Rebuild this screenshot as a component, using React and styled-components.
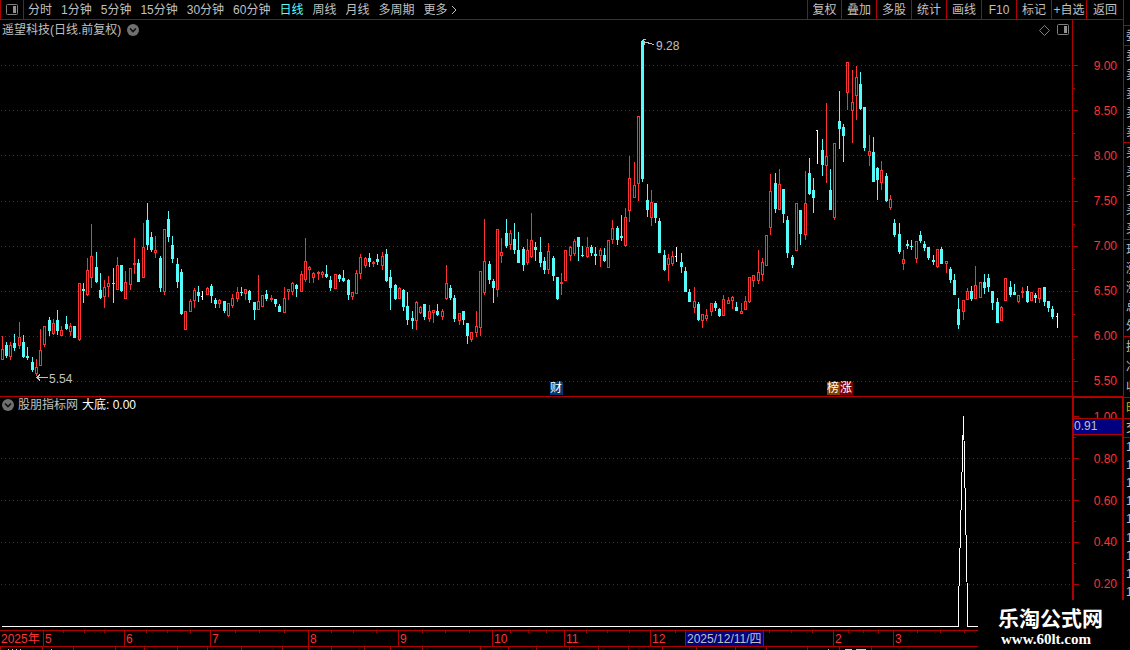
// Stock terminal: daily candles, indicator panel and time axis

// Import stuff
import React from 'react';
import styled, { createGlobalStyle } from 'styled-components';

const RED = '#b00000';
const UP = '#ff3232';
const DOWN = '#54fcfc';
const TEXT = '#c0c0c0';

const GlobalStyle = createGlobalStyle`
  * {
    box-sizing: border-box;
  }
  body {
    margin: 0;
    background: #000;
    color: ${TEXT};
    font-family: 'Liberation Sans', 'Noto Sans CJK SC', sans-serif;
    font-size: 12px;
    line-height: 14px;
  }
  button {
    margin: 0;
    padding: 0;
    border: 0;
    background: none;
    color: inherit;
    font: inherit;
    white-space: nowrap;
    cursor: pointer;
  }
  svg {
    display: block;
  }
`;

// Data
const periods = ['分时', '1分钟', '5分钟', '15分钟', '30分钟', '60分钟', '日线', '周线', '月线', '多周期'];

const tools = [
  ['复权', 34], ['叠加', 35], ['多股', 35], ['统计', 35], ['画线', 35],
  ['F10', 35], ['标记', 35], ['+自选', 35], ['返回', 37],
];

const prices = ['9.00', '8.50', '8.00', '7.50', '7.00', '6.50', '6.00', '5.50'];
const priceLines = [65, 110, 155, 201, 246, 291, 336, 381];
const levels = ['1.00', '0.80', '0.60', '0.40', '0.20'];
const levelLines = [458, 500, 542, 584];

const months = [
  ['2025年', 44], ['5', 81], ['6', 86], ['7', 98], ['8', 90], ['9', 94],
  ['10', 72], ['11', 86], ['12', 183], ['2', 60], ['3', 85],
];
const weekTicks = [
  63, 84, 104, 146, 167, 190, 235, 259, 284, 331, 353, 376, 422, 445, 469, 510, 528, 546,
  586, 607, 629, 675, 769, 791, 812, 848, 863, 878, 917, 940, 964,
];
const tabLines = [
  0, 42, 73, 115, 144, 177, 207, 241, 282, 308, 331, 364, 390, 422, 480, 508, 536, 569,
  598, 628, 662, 696, 735, 766, 807, 839, 871,
];

const quoteGroups = [
  { rows: [], height: 26 },
  { rows: ['委'], height: 20 },
  { rows: ['卖', '卖', '卖', '卖', '卖'], height: 97 },
  { rows: ['买', '买', '买', '买', '买'], height: 97 },
  { rows: ['现', '涨', '涨', '总', '外'], height: 97 },
  { rows: ['换', '净', '收'], height: 61 },
  { rows: ['时'], height: 21, color: '#c0c000' },
  { rows: ['交'], height: 19 },
  { rows: ['1', '1', '1', '1', '1', '1', '1', '1', '1'], height: 163, last: true },
];

// [x, high, body top, body bottom, low, direction]
const U = 1;
const D = 0;
const F = 2;
const candles = [
  [2, 336, 349, 360, 360, U], [6, 342, 345, 356, 358, D], [10, 342, 345, 357, 360, U], [14, 334, 343, 348, 351, D],
  [19, 322, 337, 346, 349, U], [23, 335, 342, 357, 358, D], [27, 347, 356, 358, 360, D], [32, 357, 362, 370, 372, D],
  [36, 359, 367, 374, 376, U], [40, 329, 350, 366, 366, U], [44, 326, 326, 345, 347, U], [49, 317, 320, 331, 336, D],
  [53, 319, 323, 334, 335, U], [57, 310, 320, 331, 335, D], [61, 326, 330, 336, 336, U], [66, 316, 324, 329, 330, D],
  [70, 323, 326, 332, 336, U], [74, 326, 326, 338, 338, D], [79, 283, 283, 340, 341, U], [83, 283, 289, 291, 303, D],
  [87, 258, 270, 295, 296, U], [91, 224, 256, 278, 288, U], [96, 252, 267, 282, 283, D], [100, 273, 290, 298, 299, D],
  [104, 280, 287, 297, 308, U], [108, 276, 283, 287, 297, U], [113, 268, 283, 284, 303, D], [117, 257, 265, 290, 290, U],
  [121, 265, 265, 291, 292, D], [125, 271, 282, 299, 299, U], [130, 268, 268, 285, 290, U], [134, 238, 263, 265, 274, U],
  [138, 259, 263, 282, 282, D], [143, 223, 247, 278, 278, U], [147, 203, 220, 245, 250, D], [151, 232, 237, 250, 252, D],
  [155, 236, 250, 253, 258, U], [160, 256, 258, 288, 292, D], [164, 229, 229, 292, 295, U], [168, 211, 219, 237, 242, D],
  [172, 236, 245, 259, 263, D], [177, 258, 264, 282, 288, D], [181, 269, 272, 314, 315, D], [185, 311, 311, 330, 330, U],
  [190, 299, 301, 312, 312, U], [194, 288, 290, 301, 308, U], [198, 286, 292, 296, 302, D], [202, 291, 296, 297, 300, F],
  [207, 287, 288, 295, 295, U], [211, 284, 286, 296, 303, D], [215, 298, 300, 304, 308, D], [219, 299, 300, 304, 308, U],
  [224, 301, 301, 311, 313, D], [228, 303, 303, 316, 317, U], [232, 294, 298, 306, 308, U], [237, 287, 292, 299, 302, U],
  [241, 287, 292, 293, 296, D], [245, 289, 289, 294, 300, U], [249, 290, 291, 300, 303, D], [254, 302, 302, 310, 320, D],
  [258, 275, 301, 310, 310, U], [262, 295, 295, 307, 307, U], [266, 290, 294, 299, 301, D], [271, 295, 298, 300, 302, U],
  [275, 299, 299, 304, 307, D], [279, 304, 306, 312, 312, D], [284, 287, 298, 313, 313, U], [288, 289, 289, 292, 300, U],
  [292, 282, 283, 292, 295, U], [296, 284, 285, 289, 297, D], [301, 271, 274, 292, 292, U], [305, 238, 261, 280, 282, U],
  [309, 266, 267, 270, 283, U], [313, 272, 273, 278, 283, U], [318, 271, 272, 274, 280, U], [322, 271, 272, 275, 278, U],
  [326, 265, 274, 277, 278, D], [330, 276, 280, 288, 291, D], [335, 274, 274, 289, 289, U], [339, 274, 275, 279, 282, D],
  [343, 270, 278, 281, 282, D], [348, 279, 280, 295, 300, D], [352, 292, 292, 297, 300, U], [356, 270, 273, 294, 294, U],
  [360, 254, 257, 274, 279, U], [365, 257, 258, 266, 268, U], [369, 253, 258, 262, 267, D], [373, 261, 262, 264, 267, U],
  [377, 254, 259, 262, 265, D], [382, 252, 256, 266, 270, U], [386, 249, 254, 281, 282, D], [390, 270, 277, 288, 310, D],
  [395, 284, 285, 299, 300, D], [399, 287, 288, 299, 299, U], [403, 289, 290, 307, 311, D], [407, 292, 306, 320, 325, D],
  [412, 311, 318, 321, 329, D], [416, 301, 302, 321, 330, U], [420, 306, 307, 313, 314, U], [424, 304, 304, 317, 320, D],
  [429, 305, 311, 319, 322, U], [433, 310, 310, 313, 323, U], [437, 304, 311, 315, 316, D], [442, 309, 311, 317, 320, U],
  [446, 265, 283, 299, 300, U], [450, 285, 288, 298, 300, D], [454, 295, 298, 319, 322, D], [459, 313, 313, 321, 325, U],
  [463, 311, 311, 320, 325, D], [467, 323, 323, 336, 344, D], [471, 332, 332, 340, 342, U], [476, 311, 326, 333, 337, U],
  [480, 271, 271, 328, 336, U], [484, 219, 261, 293, 295, U], [489, 261, 264, 280, 284, D], [493, 279, 281, 288, 303, D],
  [497, 229, 229, 290, 297, U], [501, 238, 252, 256, 263, U], [506, 219, 233, 246, 248, D], [510, 230, 233, 245, 250, U],
  [514, 223, 239, 250, 254, D], [518, 232, 250, 263, 263, D], [523, 247, 249, 265, 271, D], [527, 239, 250, 263, 265, U],
  [531, 213, 240, 257, 258, U], [535, 242, 247, 250, 261, D], [540, 237, 252, 263, 267, D], [544, 257, 261, 270, 274, D],
  [548, 243, 251, 270, 274, U], [553, 256, 258, 276, 281, D], [557, 277, 277, 299, 300, D], [561, 273, 282, 284, 295, U],
  [565, 250, 250, 281, 281, U], [570, 246, 247, 256, 261, U], [574, 239, 241, 254, 256, U], [578, 237, 237, 247, 261, D],
  [582, 246, 255, 256, 257, D], [587, 237, 247, 257, 258, U], [591, 245, 247, 253, 256, D], [595, 247, 254, 256, 265, D],
  [600, 248, 250, 256, 267, U], [604, 248, 255, 261, 262, D], [608, 240, 240, 268, 268, U], [612, 220, 228, 240, 244, U],
  [617, 226, 228, 240, 245, D], [621, 215, 236, 238, 241, D], [625, 208, 217, 246, 247, U], [629, 156, 178, 211, 222, U],
  [634, 162, 185, 198, 198, U], [638, 116, 116, 184, 201, U], [642, 40, 41, 179, 182, D], [647, 184, 200, 210, 217, D],
  [651, 190, 202, 218, 226, U], [655, 203, 203, 218, 223, D], [659, 218, 221, 253, 253, D], [664, 250, 255, 270, 271, D],
  [668, 254, 258, 265, 281, U], [672, 251, 256, 264, 266, U], [676, 247, 256, 257, 262, F], [681, 253, 262, 267, 273, D],
  [685, 267, 271, 292, 292, D], [689, 289, 292, 302, 302, D], [694, 287, 301, 308, 313, U], [698, 302, 304, 320, 321, D],
  [702, 314, 314, 321, 328, U], [706, 309, 315, 319, 321, U], [711, 303, 303, 312, 316, U], [715, 301, 303, 308, 311, D],
  [719, 308, 309, 316, 317, D], [723, 295, 299, 316, 316, U], [728, 297, 300, 304, 304, U], [732, 296, 297, 301, 309, U],
  [736, 302, 307, 311, 311, D], [741, 303, 311, 314, 314, U], [745, 296, 301, 310, 310, U], [749, 277, 277, 302, 303, U],
  [753, 275, 275, 281, 287, U], [758, 250, 272, 281, 284, U], [762, 258, 262, 275, 281, U], [766, 235, 235, 266, 266, U],
  [770, 174, 191, 228, 235, U], [775, 173, 183, 209, 213, D], [779, 169, 184, 210, 210, U], [783, 189, 189, 214, 223, D],
  [787, 216, 220, 253, 258, D], [792, 255, 257, 265, 268, D], [796, 203, 203, 251, 251, U], [800, 210, 210, 234, 245, D],
  [805, 171, 203, 235, 240, U], [809, 158, 173, 194, 195, D], [813, 178, 190, 198, 213, D], [817, 130, 130, 131, 164, F],
  [822, 139, 150, 165, 176, D], [826, 103, 156, 166, 183, U], [830, 169, 190, 210, 210, D], [834, 143, 143, 218, 220, U],
  [839, 91, 121, 129, 149, D], [843, 124, 127, 136, 162, D], [847, 62, 62, 93, 110, U], [852, 70, 102, 111, 143, U],
  [856, 66, 77, 96, 120, U], [860, 72, 84, 109, 110, D], [864, 107, 107, 148, 151, D], [869, 135, 151, 156, 166, U],
  [873, 137, 152, 182, 182, D], [877, 167, 168, 180, 200, D], [881, 161, 170, 183, 190, U], [886, 173, 176, 201, 202, D],
  [890, 195, 199, 208, 210, U], [894, 219, 223, 235, 237, D], [899, 223, 234, 252, 254, D], [903, 250, 259, 264, 270, U],
  [907, 240, 244, 246, 249, D], [911, 240, 246, 247, 250, D], [916, 241, 241, 259, 263, U], [920, 231, 235, 241, 243, D],
  [924, 241, 244, 248, 251, D], [928, 247, 247, 258, 260, D], [933, 255, 260, 262, 265, D], [937, 249, 249, 267, 268, U],
  [941, 247, 249, 264, 264, D], [946, 261, 261, 264, 273, U], [950, 267, 269, 280, 283, D], [954, 274, 280, 295, 295, D],
  [958, 298, 309, 325, 329, D], [963, 300, 300, 312, 320, U], [967, 288, 291, 300, 300, U], [971, 286, 291, 299, 301, D],
  [975, 266, 285, 299, 299, U], [980, 282, 282, 298, 298, U], [984, 274, 282, 288, 294, D], [988, 274, 278, 287, 292, D],
  [992, 291, 291, 303, 310, D], [997, 298, 302, 323, 323, D], [1001, 306, 307, 321, 321, U], [1005, 278, 278, 301, 301, U],
  [1010, 281, 287, 295, 297, D], [1014, 284, 292, 295, 295, D], [1018, 295, 295, 302, 303, U], [1022, 287, 291, 293, 298, U],
  [1027, 286, 291, 302, 303, D], [1031, 292, 292, 301, 301, U], [1035, 293, 295, 298, 303, D], [1039, 288, 288, 299, 303, U],
  [1044, 287, 287, 302, 306, D], [1048, 301, 301, 308, 312, D], [1052, 306, 309, 317, 319, D], [1057, 313, 316, 317, 328, F],
];

// Create styled components
const Page = styled.div`
  display: grid;
  grid-template-columns: minmax(0, 1fr) 7px;
  min-height: 100vh;
  position: relative;
  overflow: hidden;
`;
const Main = styled.main`
  display: flex;
  flex-direction: column;
  min-width: 0;
`;

const Toolbar = styled.nav`
  display: flex;
  height: 20px;
  border-bottom: 1px solid ${RED};
`;
const PanelToggle = styled.button`
  width: 24px;
  padding-left: 4px;
  border: solid ${RED};
  border-width: 0 1px;
`;
const Periods = styled.div`
  display: flex;
  gap: 9px;
  padding-left: 4px;
  flex: 1;
`;
const PeriodButton = styled.button`
  display: flex;
  align-items: center;
  gap: 2px;
  color: ${(p) => (p.$active ? DOWN : TEXT)};
`;
const ToolButton = styled.button`
  width: ${(p) => p.$width}px;
  border-left: 1px solid ${RED};
`;

const PanelRow = styled.section`
  display: flex;
  height: ${(p) => p.$height}px;
  border-bottom: ${(p) => (p.$divided ? `1px solid ${RED}` : '0')};
`;
const Panel = styled.div`
  flex: 1;
  min-width: 0;
  position: relative;
  overflow: hidden;
`;
const PanelHead = styled.header`
  display: flex;
  align-items: center;
  gap: 4px;
  height: 16px;
  padding: 0 3px 0 2px;
`;
const ChartHead = styled(PanelHead)`
  gap: 6px;
  height: 18px;
  padding: 2px 2px 0 2px;
`;
const HeadIcons = styled.div`
  display: flex;
  align-items: center;
  gap: 6px;
  margin-left: auto;
`;
const White = styled.span`
  color: #fff;
`;

const Axis = styled.div`
  display: flex;
  flex-direction: column;
  justify-content: space-between;
  align-items: flex-end;
  width: 51px;
  position: relative;
  color: ${UP};
`;
const PriceAxis = styled(Axis)`
  padding: 39px 6px 8px 0;
  border-left: 1px solid ${RED};
`;
const LevelAxis = styled(Axis)`
  padding: 12px 5px 39px 0;
  border: solid ${RED};
  border-width: 1px 1px 0 2px;
`;
const AxisTicks = styled.svg`
  position: absolute;
  left: 0;
  top: 0;
`;
const LevelCursor = styled.div`
  position: absolute;
  left: 0;
  right: 0;
  top: 20px;
  height: 17px;
  border: solid ${RED};
  border-width: 1px 0;
  background: #000080;
  color: ${TEXT};
`;

const Badge = styled.span`
  position: absolute;
  left: ${(p) => p.$x}px;
  top: 362px;
  width: 13px;
  height: 13px;
  line-height: 13px;
  background: ${(p) => p.$color};
  color: #fff;
`;

const TimeAxis = styled.div`
  display: flex;
  position: relative;
  height: 17px;
  border: solid ${RED};
  border-width: 1px 0;
  color: ${UP};
`;
const Month = styled.span`
  width: ${(p) => p.$width}px;
  padding-left: 1px;
  border-right: 1px solid ${RED};
  line-height: 16px;
  white-space: nowrap;
`;
const TimeTicks = styled.svg`
  position: absolute;
  left: 0;
  top: 0;
`;
const DateCursor = styled.span`
  position: absolute;
  left: 685px;
  top: 0;
  width: 79px;
  height: 15px;
  padding-left: 1px;
  border: solid ${RED};
  border-width: 0 1px;
  background: #000080;
  color: ${TEXT};
  line-height: 16px;
  white-space: nowrap;
`;
const TabStrip = styled.div`
  height: 3px;
  overflow: hidden;
`;

const Quotes = styled.aside`
  border-left: 1px solid ${RED};
  overflow: hidden;
`;
const QuoteGroup = styled.div`
  display: flex;
  flex-direction: column;
  justify-content: space-around;
  height: ${(p) => p.$height}px;
  padding-left: 2px;
  border-bottom: ${(p) => (p.$last ? '0' : `1px solid ${RED}`)};
  color: ${(p) => p.$color || TEXT};
`;

const SiteMark = styled.a`
  position: absolute;
  right: 0;
  bottom: 0;
  width: 152px;
  height: 50px;
  padding: 7px 0 0 20px;
  background: #000;
  color: #fff;
  text-decoration: none;
`;
const SiteName = styled.strong`
  display: block;
  font-size: 21px;
  line-height: 24px;
  white-space: nowrap;
`;
const SiteUrl = styled.strong`
  display: block;
  padding-left: 3px;
  font-family: 'Liberation Serif', serif;
  font-size: 15px;
  line-height: 16px;
`;

// Icons
const SidePanelIcon = () => (
  <svg width="14" height="12" viewBox="0 0 14 12">
    <rect x="1.5" y="0.5" width="11" height="10" rx="1" fill="none" stroke="#808080" />
    <rect x="8" y="2" width="3" height="7" fill="#909090" />
  </svg>
);
const DropIcon = () => (
  <svg width="12" height="12" viewBox="0 0 12 12">
    <circle cx="6" cy="6" r="6" fill="#707070" />
    <path d="M3 4.5 L6 7.5 L9 4.5" fill="none" stroke="#101010" strokeWidth="1.6" />
  </svg>
);
const DiamondIcon = () => (
  <svg width="11" height="11" viewBox="0 0 11 11">
    <path d="M5.5 0.5 L10.5 5.5 L5.5 10.5 L0.5 5.5 Z" fill="none" stroke="#808080" />
  </svg>
);
const MoreIcon = () => (
  <svg width="8" height="10" viewBox="0 0 8 10">
    <path d="M2 1 L6 5 L2 9" fill="none" stroke={TEXT} />
  </svg>
);

const GridLine = ({ y }) => (
  <line x1="1" x2="100%" y1={y + 0.5} y2={y + 0.5} stroke={RED} strokeDasharray="1 3" />
);

const Candle = ({ data }) => {
  const [x, high, top, bottom, low, dir] = data;
  if (dir === F) {
    return (
      <g fill="#fff">
        <rect x={x} y={high} width="1" height={low - high} />
        <rect x={x - 1} y={top} width="1" height="1" />
      </g>
    );
  }
  // a rising candle is a frame one pixel thick, a falling one is solid
  const hole = dir === U && bottom - top > 2
    ? `M${x} ${top + 1} h1 V${bottom - 1} h-1 Z`
    : '';
  return (
    <g fill={dir === U ? UP : DOWN}>
      <rect x={x} y={high} width="1" height={top - high} />
      <rect x={x} y={bottom} width="1" height={low - bottom} />
      <path d={`M${x - 1} ${top} h3 V${bottom} h-3 Z ${hole}`} fillRule="evenodd" />
    </g>
  );
};

// The candles are stored in page units, the chart begins 38 below the top
const CandleChart = () => (
  <svg width="100%" height="358" shapeRendering="crispEdges">
    <g transform="translate(0 -38)">
      {priceLines.map((y) => <GridLine key={y} y={y} />)}
      {candles.map((c) => <Candle key={c[0]} data={c} />)}
      <g fill="none" stroke={TEXT}>
        <path d="M37 377.5 H48 M40 374.5 L37 377.5 L40 380.5" />
        <path d="M643 41.5 L654 44.5 M646 39.5 H643.5 V41.5 L645 44.5" />
      </g>
      <g fill={TEXT}>
        <text x="49" y="383">5.54</text>
        <text x="656" y="50">9.28</text>
      </g>
    </g>
  </svg>
);

const IndicatorChart = () => (
  <svg width="100%" height="217" shapeRendering="crispEdges">
    <g transform="translate(0 -413)">
      {levelLines.map((y) => <GridLine key={y} y={y} />)}
      <path d="M2 626.5 H958.5 V605 L963.5 416 L967.5 605 V626.5 H1060" fill="none" stroke="#fff" />
    </g>
  </svg>
);

const Ticks = ({ lines, half, offset, height }) => (
  <AxisTicks width="6" height={height} aria-hidden="true">
    {lines.map((y) => <rect key={y} y={y - offset} width="5" height="1" fill={RED} />)}
    {lines.map((y) => <rect key={y} y={y - offset + half} width="2" height="1" fill={RED} />)}
  </AxisTicks>
);

export default function App() {
  return (
    <Page>
      <GlobalStyle />
      <Main>
        <Toolbar>
          <PanelToggle aria-label="侧栏"><SidePanelIcon /></PanelToggle>
          <Periods>
            {periods.map((p) => <PeriodButton key={p} $active={p === '日线'}>{p}</PeriodButton>)}
            <PeriodButton>更多<MoreIcon /></PeriodButton>
          </Periods>
          {tools.map(([name, width]) => <ToolButton key={name} $width={width}>{name}</ToolButton>)}
        </Toolbar>

        <PanelRow $height={377} $divided>
          <Panel>
            <ChartHead>
              <span>遥望科技(日线.前复权)</span>
              <DropIcon />
              <HeadIcons>
                <DiamondIcon />
                <SidePanelIcon />
              </HeadIcons>
            </ChartHead>
            <CandleChart />
            <Badge $x={550} $color="#003870">财</Badge>
            <Badge $x={827} $color="#804000">榜</Badge>
            <Badge $x={840} $color="#800000">涨</Badge>
          </Panel>
          <PriceAxis>
            <Ticks lines={priceLines} half={23} offset={20} height={376} />
            {prices.map((p) => <span key={p}>{p}</span>)}
          </PriceAxis>
        </PanelRow>

        <PanelRow $height={233}>
          <Panel>
            <PanelHead>
              <DropIcon />
              <span>股朋指标网</span>
              <White>大底: 0.00</White>
            </PanelHead>
            <IndicatorChart />
          </Panel>
          <LevelAxis>
            <Ticks lines={[416, ...levelLines]} half={21} offset={398} height={232} />
            {levels.map((l) => <span key={l}>{l}</span>)}
            <LevelCursor>0.91</LevelCursor>
          </LevelAxis>
        </PanelRow>

        <TimeAxis>
          <TimeTicks width="100%" height="3" aria-hidden="true">
            {weekTicks.map((x) => <rect key={x} x={x} width="1" height="2" fill={RED} />)}
          </TimeTicks>
          {months.map(([name, width]) => <Month key={name} $width={width}>{name}</Month>)}
          <DateCursor>2025/12/11/四</DateCursor>
        </TimeAxis>
        <TabStrip>
          <svg width="100%" height="3" aria-hidden="true">
            {tabLines.map((x) => <rect key={x} x={x} width="1" height="3" fill={RED} />)}
            <g fill={TEXT}>
              <rect x="8" y="2" width="1" height="1" />
              <rect x="12" y="2" width="1" height="1" />
              <rect x="16" y="2" width="1" height="1" />
              <rect x="20" y="2" width="1" height="1" />
              <rect x="51" y="2" width="1" height="1" />
              <rect x="828" y="2" width="1" height="1" />
            </g>
            <rect x="845" y="2" width="7" height="1" fill={DOWN} />
            <rect x="856" y="2" width="10" height="1" fill={DOWN} />
          </svg>
        </TabStrip>
      </Main>

      <Quotes>
        {quoteGroups.map((g, i) => (
          <QuoteGroup key={i} $height={g.height} $color={g.color} $last={g.last}>
            {g.rows.map((r, j) => <span key={j}>{r}</span>)}
          </QuoteGroup>
        ))}
      </Quotes>

      <SiteMark href="#">
        <SiteName>乐淘公式网</SiteName>
        <SiteUrl>www.60lt.com</SiteUrl>
      </SiteMark>
    </Page>
  );
}
